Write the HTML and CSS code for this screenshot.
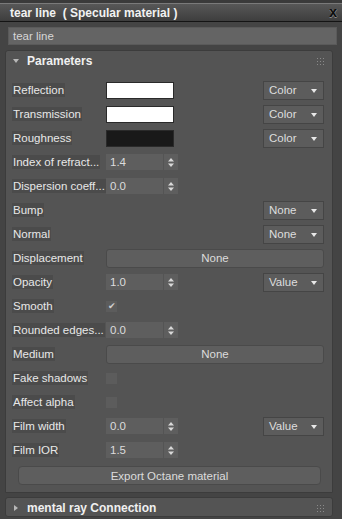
FILE: index.html
```html
<!DOCTYPE html>
<html>
<head>
<meta charset="utf-8">
<link rel="stylesheet" href="styles.css">
</head>
<body>
<div class="app">
  <div class="topstrip"></div>
  <div class="titlebar">
    <span class="title">tear line&nbsp; ( Specular material )</span>
    <span class="close">x</span>
  </div>
  <div class="namebox">tear line</div>

  <div class="rollout">
    <div class="rhead">
      <span class="tri-down"></span>
      <span class="rtitle">Parameters</span>
      <span class="grip"><i></i><i></i><i></i><i></i><i></i><i></i><i></i><i></i><i></i></span>
    </div>
    <div class="rows">
      <div class="row"><span class="lbl"><span>Reflection</span></span><span class="swatch white"></span><span class="dd">Color<b></b></span></div>
      <div class="row"><span class="lbl"><span>Transmission</span></span><span class="swatch white"></span><span class="dd">Color<b></b></span></div>
      <div class="row"><span class="lbl"><span>Roughness</span></span><span class="swatch black"></span><span class="dd">Color<b></b></span></div>
      <div class="row"><span class="lbl"><span>Index of refract...</span></span><span class="spin"><span class="num">1.4</span><span class="arrows"><svg width="6" height="9" viewBox="0 0 6 9"><path d="M3 0L6 3.5H0Z M3 9L6 5.5H0Z" fill="#d8d8d8"/></svg></span></span></div>
      <div class="row"><span class="lbl"><span>Dispersion coeff...</span></span><span class="spin"><span class="num">0.0</span><span class="arrows"><svg width="6" height="9" viewBox="0 0 6 9"><path d="M3 0L6 3.5H0Z M3 9L6 5.5H0Z" fill="#d8d8d8"/></svg></span></span></div>
      <div class="row"><span class="lbl"><span>Bump</span></span><span class="dd">None<b></b></span></div>
      <div class="row"><span class="lbl"><span>Normal</span></span><span class="dd">None<b></b></span></div>
      <div class="row"><span class="lbl"><span>Displacement</span></span><span class="wide">None</span></div>
      <div class="row"><span class="lbl"><span>Opacity</span></span><span class="spin"><span class="num">1.0</span><span class="arrows"><svg width="6" height="9" viewBox="0 0 6 9"><path d="M3 0L6 3.5H0Z M3 9L6 5.5H0Z" fill="#d8d8d8"/></svg></span></span><span class="dd">Value<b></b></span></div>
      <div class="row"><span class="lbl"><span>Smooth</span></span><span class="chk">&#10004;</span></div>
      <div class="row"><span class="lbl"><span>Rounded edges...</span></span><span class="spin"><span class="num">0.0</span><span class="arrows"><svg width="6" height="9" viewBox="0 0 6 9"><path d="M3 0L6 3.5H0Z M3 9L6 5.5H0Z" fill="#d8d8d8"/></svg></span></span></div>
      <div class="row"><span class="lbl"><span>Medium</span></span><span class="wide">None</span></div>
      <div class="row"><span class="lbl"><span>Fake shadows</span></span><span class="chk"></span></div>
      <div class="row"><span class="lbl"><span>Affect alpha</span></span><span class="chk"></span></div>
      <div class="row"><span class="lbl"><span>Film width</span></span><span class="spin"><span class="num">0.0</span><span class="arrows"><svg width="6" height="9" viewBox="0 0 6 9"><path d="M3 0L6 3.5H0Z M3 9L6 5.5H0Z" fill="#d8d8d8"/></svg></span></span><span class="dd">Value<b></b></span></div>
      <div class="row"><span class="lbl"><span>Film IOR</span></span><span class="spin"><span class="num">1.5</span><span class="arrows"><svg width="6" height="9" viewBox="0 0 6 9"><path d="M3 0L6 3.5H0Z M3 9L6 5.5H0Z" fill="#d8d8d8"/></svg></span></span></div>
    </div>
    <div class="export">Export Octane material</div>
  </div>

  <div class="rollout closed">
    <div class="rhead">
      <span class="tri-right"></span>
      <span class="rtitle">mental ray Connection</span>
      <span class="grip"><i></i><i></i><i></i><i></i><i></i><i></i><i></i><i></i><i></i></span>
    </div>
  </div>
</div>
</body>
</html>
```

FILE: styles.css
```css
* { box-sizing: border-box; }
html, body { margin: 0; padding: 0; }
body {
  width: 342px;
  height: 519px;
  overflow: hidden;
  background: #444444;
  font-family: "Liberation Sans", Arial, sans-serif;
  font-size: 11.5px;
  color: #e4e4e4;
}
.app { width: 342px; height: 519px; }
.topstrip {
  height: 4px;
  background: #3a3a3a;
  border-bottom: 1px solid #151515;
}
.titlebar {
  height: 19px;
  background: linear-gradient(#575757, #3e3e3e);
  border-top: 1px solid #7a7a7a;
  border-bottom: 1px solid #141414;
  display: flex;
  align-items: center;
  padding: 0 5px 0 10px;
  margin-top: -1px;
}
.title {
  font-weight: bold;
  font-size: 12px;
  color: #f2f2f2;
  flex: 1;
  white-space: pre;
}
.close {
  font-weight: bold;
  font-size: 14px;
  color: #0c0c0c;
  text-shadow: 0 1px 0 #8a8a8a, 1px 0 0 #6a6a6a;
  line-height: 1;
  margin-top: -2px;
}
.namebox {
  margin: 5px 5px 0 8px;
  height: 18px;
  background: #646464;
  border: 1px solid #5a5a5a;
  padding: 0 4px;
  line-height: 16px;
  color: #d6d6d6;
}
.rollout {
  margin: 5px 9px 0 5px;
  width: 328px;
  background: #545454;
  border: 1px solid #3c3c3c;
  border-radius: 3px 3px 0 0;
  padding-bottom: 7px;
}
.rollout.closed { margin-top: 4px; padding-bottom: 0; height: 20px; border-radius: 3px; }
.rhead {
  height: 19px;
  display: flex;
  align-items: center;
  padding-left: 7px;
  position: relative;
}
.rtitle { font-weight: bold; font-size: 12px; color: #f0f0f0; margin-left: 8px; }
.tri-down {
  width: 0; height: 0;
  border-left: 3px solid transparent;
  border-right: 3px solid transparent;
  border-top: 4px solid #b8b8b8;
}
.tri-right {
  width: 0; height: 0;
  border-top: 3px solid transparent;
  border-bottom: 3px solid transparent;
  border-left: 4px solid #b8b8b8;
  margin-left: 1px; margin-right: 1px;
}
.grip {
  position: absolute;
  right: 8px;
  top: 7px;
  width: 7px;
  height: 7px;
  display: grid;
  grid-template-columns: repeat(3, 1px);
  grid-template-rows: repeat(3, 1px);
  gap: 2px 2px;
}
.grip i { background: #8a8a8a; width: 1px; height: 1px; }
.rows { padding: 8px 8px 0 6px; }
.row {
  height: 24px;
  display: flex;
  align-items: center;
}
.lbl {
  width: 94px;
  flex: none;
  white-space: nowrap;
  color: #e8e8e8;
}
.lbl span {
  background: #4b4b4b;
  padding: 1px;
}
.swatch {
  width: 68px;
  height: 17px;
  border: 1px solid #2a2a2a;
}
.swatch.white { background: #ffffff; }
.swatch.black { background: #191919; }
.dd {
  margin-left: auto;
  width: 61px;
  height: 19px;
  background: #5c5c5c;
  border: 1px solid #454545;
  display: flex;
  align-items: center;
  padding-left: 5px;
  position: relative;
  color: #dedede;
}
.dd b {
  position: absolute;
  right: 6px;
  top: 7px;
  width: 0; height: 0;
  border-left: 3px solid transparent;
  border-right: 3px solid transparent;
  border-top: 4px solid #e8e8e8;
}
.spin { display: flex; height: 16px; }
.num {
  width: 57px;
  background: #5e5e5e;
  padding-left: 4px;
  line-height: 16px;
  color: #dcdcdc;
}
.arrows {
  width: 14px;
  margin-left: 1px;
  background: #5e5e5e;
  display: flex;
  align-items: center;
  justify-content: center;
}
.wide {
  flex: 1;
  height: 19px;
  background: #5e5e5e;
  border: 1px solid #4a4a4a;
  border-radius: 3px;
  display: flex;
  align-items: center;
  justify-content: center;
  color: #dcdcdc;
}
.chk {
  width: 11px;
  height: 11px;
  background: #5c5c5c;
  display: flex;
  align-items: center;
  justify-content: center;
  font-size: 9px;
  color: #cfcfcf;
  line-height: 1;
}
.export {
  margin: 4px 11px 0 12px;
  height: 19px;
  background: #5e5e5e;
  border: 1px solid #4a4a4a;
  border-radius: 4px;
  display: flex;
  align-items: center;
  justify-content: center;
  color: #dcdcdc;
}
```
